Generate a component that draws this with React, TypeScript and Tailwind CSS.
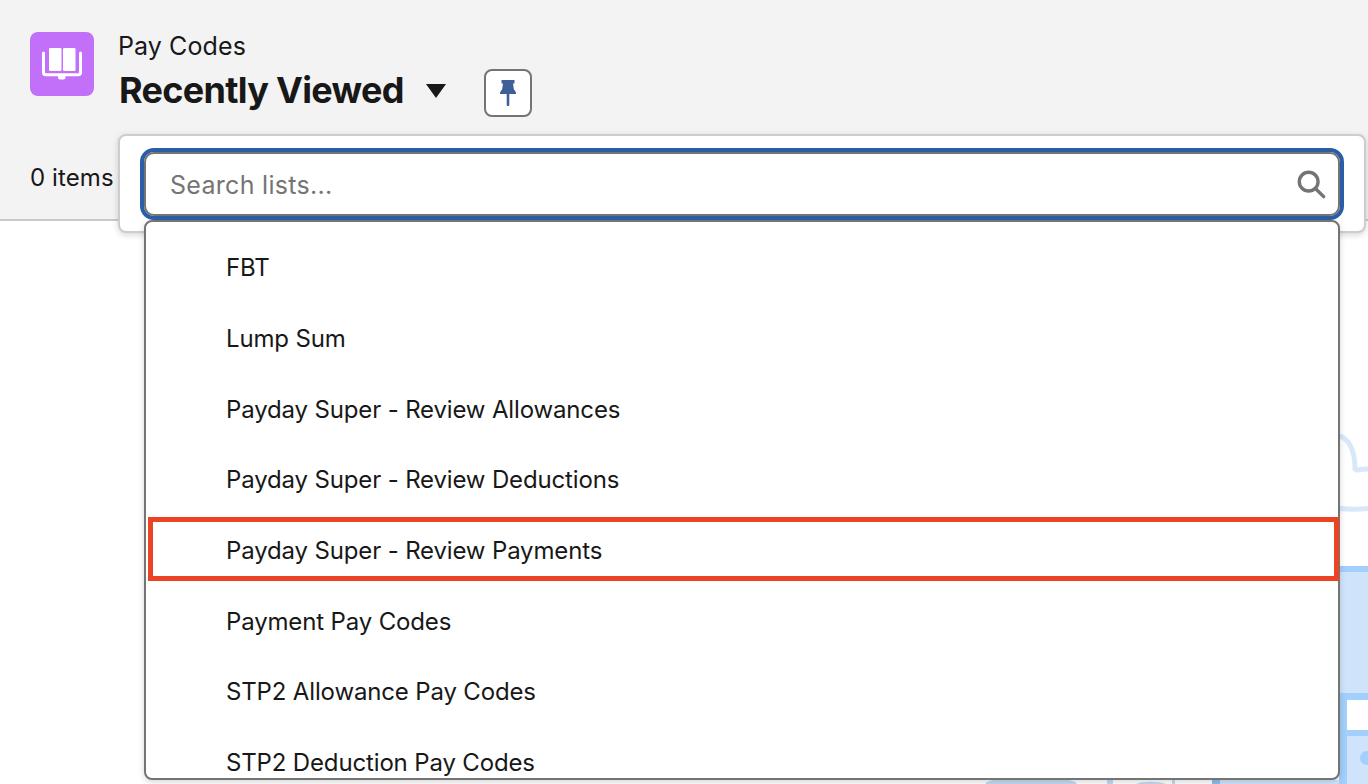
import React from "react";

const items = [
  "FBT",
  "Lump Sum",
  "Payday Super - Review Allowances",
  "Payday Super - Review Deductions",
  "Payday Super - Review Payments",
  "Payment Pay Codes",
  "STP2 Allowance Pay Codes",
  "STP2 Deduction Pay Codes",
];

function BookIcon() {
  return (
    <svg width="64" height="64" viewBox="0 0 64 64" fill="none">
      <rect x="19" y="16" width="12.500" height="23" rx="1.200" fill="#fff" />
      <rect x="33" y="16" width="12.500" height="23" rx="1.200" fill="#fff" />
      <path d="M13.500 21v19.500c0 1.500.8 2.300 2.300 2.300h32.400c1.500 0 2.300-.8 2.300-2.300V21" stroke="#fff" strokeWidth="3" strokeLinecap="round" strokeLinejoin="round" />
      <path d="M28 43h7.500v2.500c0 1.200-.8 2-2 2H30c-1.200 0-2-.8-2-2z" fill="#fff" />
    </svg>
  );
}

function PinIcon() {
  return (
    <svg width="16" height="26" viewBox="0 0 16 26" fill="#3e5f97">
      <path d="M1.500 0h13v3.500h-1.500l.8 5.500 2.200 3.500V14H0v-1.500L2.200 9 3 3.500H1.500z" />
      <rect x="6.700" y="13" width="2.600" height="13" rx="1" />
    </svg>
  );
}

function Illustration() {
  return (
    <svg width="1368" height="564" viewBox="0 0 1368 564" fill="none" className="block">
      <path d="M1339 216c10 2 16 15 16 33 l2 1c4-1 8-1 11-1" stroke="#d8e8fa" strokeWidth="5" />
      <path d="M1339 288.500c10 1 20 1 29 0" stroke="#d8e8fa" strokeWidth="5" />
      <rect x="1339" y="346" width="29" height="218" fill="#cfe4fb" />
      <rect x="1339" y="346" width="29" height="6" fill="#a2cffb" />
      <rect x="1339" y="473" width="29" height="7" fill="#a2cffb" />
      <rect x="1339" y="473" width="8" height="91" fill="#a2cffb" />
      <rect x="1347" y="480" width="21" height="30" fill="#ffffff" />
      <rect x="1347" y="510" width="21" height="6" fill="#a2cffb" />
      <circle cx="1367" cy="538" r="7" fill="#a2cffb" />
      <path d="M985 564c2-3 6-4 12-4h68c6 0 10 1 12 4" fill="#c3d9f2" />
      <rect x="1107" y="560" width="6" height="4" fill="#c3d9f2" />
      <path d="M1136 564c6-3 22-3 30 0" fill="#c3d9f2" />
      <rect x="1172" y="560" width="3" height="4" fill="#c3d9f2" />
      <rect x="1212" y="560" width="8" height="4" fill="#8ebcec" />
      <rect x="1220" y="560" width="119" height="4" fill="#cfe4fb" />
    </svg>
  );
}

export default function App() {
  return (
    <div className="relative w-[1368px] h-[784px] overflow-hidden bg-white font-['Inter','Liberation_Sans',sans-serif] text-[#181818]">
      <header className="h-[221px] bg-[#f3f3f3] border-b-2 border-[#c9c9c9] pl-[30px] pt-[32px] flex flex-col">
        <div className="flex items-start">
          <div className="w-[64px] h-[64px] rounded-[8px] bg-[#c26ffa] shrink-0">
            <BookIcon />
          </div>
          <div className="ml-[25px] flex flex-col">
            <div className="text-[25px] leading-[30px] tracking-[0.1px] -ml-px -mt-px">Pay Codes</div>
            <div className="flex items-start mt-[6px]">
              <div className="text-[36px] leading-[46px] font-bold tracking-[-0.7px]">Recently Viewed</div>
              <svg width="20" height="14" viewBox="0 0 20 14" className="ml-[22px] mt-[17px]" fill="#181818">
                <path d="M0 0h20L10 14z" />
              </svg>
              <div className="ml-[38px] mt-[2px] w-[48px] h-[48px] rounded-[8px] border-2 border-[#747474] bg-white flex items-center justify-center">
                <PinIcon />
              </div>
            </div>
          </div>
        </div>
        <div className="mt-[46px] text-[24px] leading-[30px] tracking-[0.1px]">0 items</div>
      </header>

      <div className="absolute left-0 top-[220px]">
        <Illustration />
      </div>

      <div className="absolute left-[118px] top-[134px] w-[1248px] h-[99px] rounded-[8px] bg-white border-2 border-[#cdcdcd] shadow-[0_2px_6px_rgba(0,0,0,0.16)]">
        <div className="absolute left-[20px] top-[12px] w-[1204px] h-[72px] rounded-[14px] border-[4px] border-[#2a5fa8] bg-white">
          <div className="h-full rounded-[10px] border-2 border-[#747474] flex items-center pl-[24px] pr-[12px]">
            <span className="text-[25px] tracking-[0.3px] text-[#757575] flex-1 pt-[3px]">Search lists...</span>
            <svg width="30" height="30" viewBox="0 0 32 32" fill="none" stroke="#747474" strokeWidth="3.600" strokeLinecap="round">
              <circle cx="13.500" cy="13.500" r="10" />
              <path d="M21 21l8.500 8.500" />
            </svg>
          </div>
        </div>
      </div>

      <div className="absolute left-[144px] top-[220px] w-[1196px] h-[560px] rounded-[8px] bg-white border-2 border-[#747474] overflow-hidden shadow-[0_2px_6px_rgba(0,0,0,0.16)]">
        <ul className="flex flex-col pt-[11px]">
          {items.map((t) => (
            <li key={t} className="h-[70.7px] shrink-0 flex items-center pl-[80px] text-[24px] tracking-[-0.15px]">
              {t}
            </li>
          ))}
        </ul>
      </div>

      <div className="absolute left-[148px] top-[517px] w-[1191px] h-[64px] border-[5px] border-[#ec4325]" />
    </div>
  );
}
